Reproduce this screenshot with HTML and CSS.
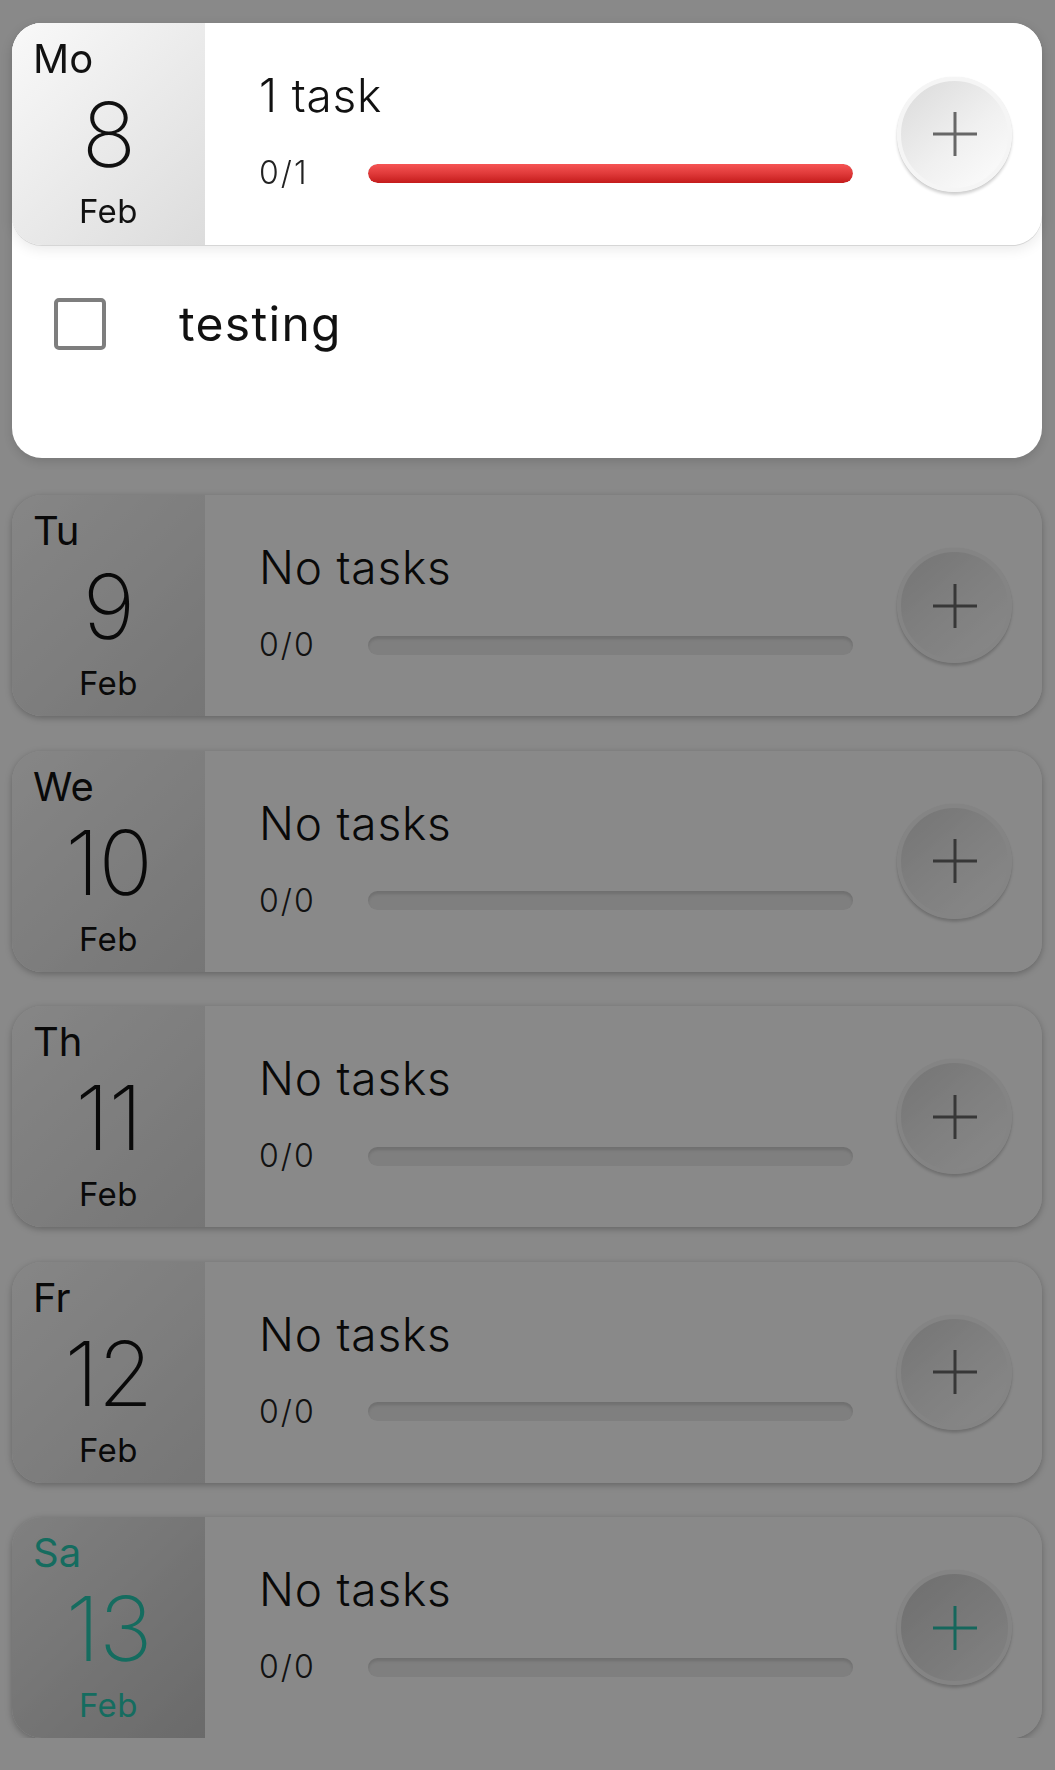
FILE: index.html
```html
<!DOCTYPE html>
<html lang="en">
<head>
<meta charset="utf-8">
<title>Week</title>
<link rel="stylesheet" href="styles.css">
</head>
<body>
<div class="overlay"></div>
<main class="list">
  <section class="day open">
    <div class="card">
      <div class="date">
        <span class="dow">Mo</span>
        <span class="num">8</span>
        <span class="mon">Feb</span>
      </div>
      <div class="main">
        <div class="title">1 task</div>
        <div class="meta">
          <span class="count">0/1</span>
          <span class="track"><span class="fill" style="width:100%"></span></span>
        </div>
      </div>
      <button class="add"><svg viewBox="0 0 44 44" width="44" height="44"><path d="M22 0V44M0 22H44"/></svg></button>
    </div>
    <div class="tasks">
      <div class="task"><span class="check"></span><span class="task-name">testing</span></div>
    </div>
  </section>

  <section class="day">
    <div class="card">
      <div class="date"><span class="dow">Tu</span><span class="num">9</span><span class="mon">Feb</span></div>
      <div class="main">
        <div class="title">No tasks</div>
        <div class="meta"><span class="count">0/0</span><span class="track"></span></div>
      </div>
      <button class="add"><svg viewBox="0 0 44 44" width="44" height="44"><path d="M22 0V44M0 22H44"/></svg></button>
    </div>
  </section>

  <section class="day">
    <div class="card">
      <div class="date"><span class="dow">We</span><span class="num">10</span><span class="mon">Feb</span></div>
      <div class="main">
        <div class="title">No tasks</div>
        <div class="meta"><span class="count">0/0</span><span class="track"></span></div>
      </div>
      <button class="add"><svg viewBox="0 0 44 44" width="44" height="44"><path d="M22 0V44M0 22H44"/></svg></button>
    </div>
  </section>

  <section class="day">
    <div class="card">
      <div class="date"><span class="dow">Th</span><span class="num">11</span><span class="mon">Feb</span></div>
      <div class="main">
        <div class="title">No tasks</div>
        <div class="meta"><span class="count">0/0</span><span class="track"></span></div>
      </div>
      <button class="add"><svg viewBox="0 0 44 44" width="44" height="44"><path d="M22 0V44M0 22H44"/></svg></button>
    </div>
  </section>

  <section class="day">
    <div class="card">
      <div class="date"><span class="dow">Fr</span><span class="num">12</span><span class="mon">Feb</span></div>
      <div class="main">
        <div class="title">No tasks</div>
        <div class="meta"><span class="count">0/0</span><span class="track"></span></div>
      </div>
      <button class="add"><svg viewBox="0 0 44 44" width="44" height="44"><path d="M22 0V44M0 22H44"/></svg></button>
    </div>
  </section>

  <section class="day weekend">
    <div class="card">
      <div class="date"><span class="dow">Sa</span><span class="num">13</span><span class="mon">Feb</span></div>
      <div class="main">
        <div class="title">No tasks</div>
        <div class="meta"><span class="count">0/0</span><span class="track"></span></div>
      </div>
      <button class="add"><svg viewBox="0 0 44 44" width="44" height="44"><path d="M22 0V44M0 22H44"/></svg></button>
    </div>
  </section>
</main>
</body>
</html>
```

FILE: styles.css
```css
html, body {
  margin: 0;
  padding: 0;
  background: #ffffff;
  font-family: Inter, "Noto Sans", sans-serif;
  color: #111;
}

.overlay {
  position: fixed;
  inset: 0;
  background: rgba(0, 0, 0, 0.463);
  z-index: 1;
}

.list {
  display: flex;
  flex-direction: column;
  gap: 34.5px;
  padding: 23px 13px 0 12px;
}

.day {
  border-radius: 30px;
  background: #fff;
  box-shadow: 0 2px 7px rgba(0, 0, 0, 0.28);
}

.day.open {
  position: relative;
  z-index: 2;
  margin-bottom: 2.5px;
  box-shadow: 0 4px 10px rgba(0, 0, 0, 0.12);
}

.card {
  display: flex;
  align-items: center;
  height: 222px;
  border-radius: 30px;
  overflow: hidden;
  background: #fff;
  padding-right: 30px;
  box-sizing: border-box;
}

.day:not(.open) .card {
  height: 221px;
}

.open .card {
  position: relative;
  box-shadow: 0 1px 0 #d6d6d6, 0 4px 14px rgba(0, 0, 0, 0.09);
}

.date {
  align-self: stretch;
  width: 193px;
  flex: none;
  display: flex;
  flex-direction: column;
  align-items: center;
  padding-top: 16px;
  box-sizing: border-box;
  background: linear-gradient(135deg, #f9f9f9 0%, #dcdcdc 100%);
  font-weight: 400;
}

.weekend .date {
  background: linear-gradient(135deg, #eeeeee 0%, #c6c6c6 100%);
  color: #27c9b2;
}

.dow {
  align-self: flex-start;
  margin-left: 21px;
  font-size: 40px;
  line-height: 40px;
}

.num {
  margin-top: 11px;
  font-size: 90px;
  line-height: 89px;
  font-weight: 200;
  letter-spacing: -1px;
}

.mon {
  margin-top: 16px;
  font-size: 33px;
  line-height: 33px;
  letter-spacing: 0.5px;
}

.main {
  flex: 1;
  align-self: stretch;
  display: flex;
  flex-direction: column;
  padding: 50px 44px 0 54px;
}

.title {
  font-size: 46px;
  line-height: 44px;
  font-weight: 300;
  letter-spacing: 0.8px;
  color: #111;
}

.meta {
  display: flex;
  align-items: center;
  margin-top: 40px;
  height: 32px;
}

.count {
  width: 109px;
  flex: none;
  font-size: 32px;
  line-height: 32px;
  font-weight: 300;
  letter-spacing: 2px;
  color: #222;
}

.track {
  flex: 1;
  height: 19px;
  border-radius: 10px;
  background: #ececec;
  box-shadow: inset 0 3px 3px rgba(0, 0, 0, 0.12);
  overflow: hidden;
  display: flex;
}

.fill {
  height: 100%;
  border-radius: 10px;
  background: linear-gradient(180deg, #f65454 0%, #e03a3a 50%, #c41b1b 100%);
}

.add {
  flex: none;
  width: 115px;
  height: 115px;
  border-radius: 50%;
  border: 4px solid #f5f5f5;
  background: linear-gradient(140deg, #dadada 0%, #f0f0f0 55%, #fdfdfd 100%);
  box-shadow: 0 3px 3px rgba(0, 0, 0, 0.18), 0 0 1px rgba(0, 0, 0, 0.15);
  display: flex;
  align-items: center;
  justify-content: center;
  padding: 0;
  box-sizing: border-box;
}

.weekend .add {
  background: linear-gradient(140deg, #cfcfcf 0%, #e2e2e2 55%, #f2f2f2 100%);
}

.add svg {
  display: block;
}

.add path {
  stroke: #676767;
  stroke-width: 3;
  fill: none;
}

.weekend .add path {
  stroke: #27c0ab;
}

.tasks {
  height: 213px;
  box-sizing: border-box;
  padding: 53px 42px 0;
}

.task {
  display: flex;
  align-items: center;
  gap: 73px;
}

.check {
  width: 52px;
  height: 52px;
  box-sizing: border-box;
  border: 4px solid #7e7e7e;
  border-radius: 5px;
  flex: none;
}

.task-name {
  font-size: 48px;
  line-height: 52px;
  font-weight: 400;
  letter-spacing: 1.3px;
  color: #111;
}
```
